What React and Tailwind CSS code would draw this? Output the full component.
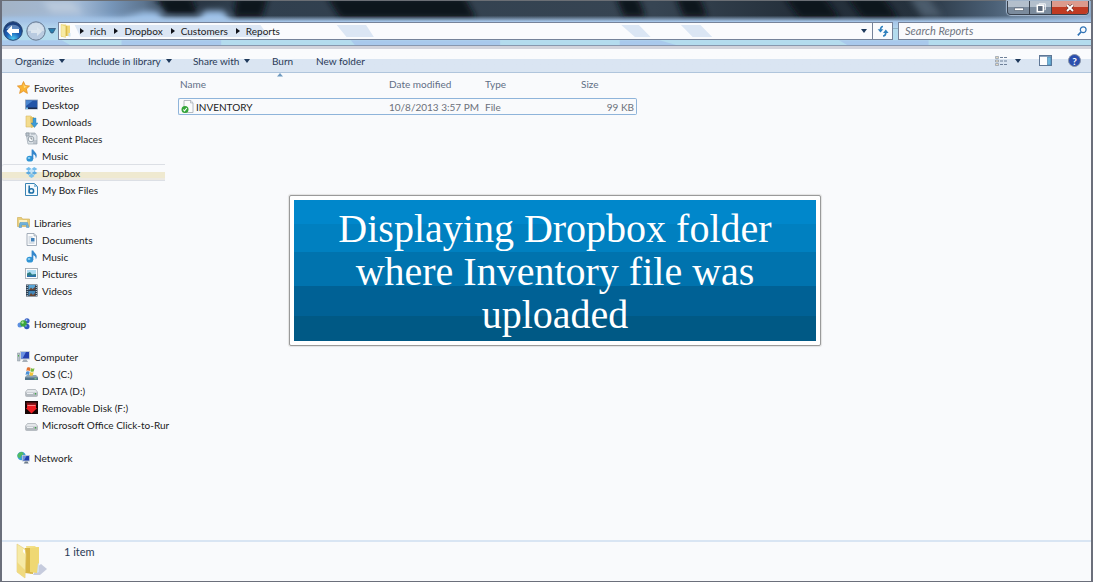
import React from 'react';

const StarIcon = () => (
  <svg viewBox="0 0 13 13" className="w-[13px] h-[13px] shrink-0" aria-hidden="true">
    <path d="M6.500 .5 8.300 4.500 12.600 5 9.400 8l1 4.400-3.900-2.300-3.900 2.300 1-4.400L.4 5l4.300-.5z" fill="#fbb434" stroke="#e08a1e" strokeWidth=".7" />
    <path d="M6.500 2.500 7.700 5.300 10 5.600 7 7z" fill="#ffe48c" />
  </svg>
);

const DesktopIcon = () => (
  <svg viewBox="0 0 13 13" className="w-[13px] h-[13px] shrink-0" aria-hidden="true">
    <rect x=".5" y="2" width="12" height="9" fill="#2456a8" stroke="#8fa0b8" strokeWidth=".8" />
    <path d="M1 2.500h7L1 8z" fill="#4b86cf" />
    <path d="M1 9.500h11v1.500H1z" fill="#1d2c4c" />
    <path d="M1 9.500h2v1.500H1z" fill="#74c1ee" />
  </svg>
);

const DownloadsIcon = () => (
  <svg viewBox="0 0 13 13" className="w-[13px] h-[13px] shrink-0" aria-hidden="true">
    <path d="M1 1h5l1 1v10H1z" fill="#f3dc8e" stroke="#d9b863" strokeWidth=".6" />
    <path d="M5 2h4v10l-3 1z" fill="#e3c263" />
    <path d="M8 3h3v5h2l-3.500 4.500L6 8h2z" fill="#3d9bd6" stroke="#2378b3" strokeWidth=".4" />
  </svg>
);

const RecentIcon = () => (
  <svg viewBox="0 0 13 13" className="w-[13px] h-[13px] shrink-0" aria-hidden="true">
    <path d="M1 1h9l2 3v8H3z" fill="#dfe5ea" stroke="#9aa4ae" strokeWidth=".7" />
    <path d="M1 1h3v3H1zM6 2h4M8 9h4M8 11h4" fill="#b9c3cc" stroke="#8f9aa5" strokeWidth=".8" />
    <circle cx="6" cy="7" r="2.800" fill="#f6f9fb" stroke="#7f8b97" strokeWidth=".8" />
    <path d="M6 5.200V7h1.500" fill="none" stroke="#56616c" strokeWidth=".7" />
  </svg>
);

const MusicIcon = () => (
  <svg viewBox="0 0 13 13" className="w-[13px] h-[13px] shrink-0" aria-hidden="true">
    <ellipse cx="4.800" cy="9.700" rx="3.400" ry="2.900" fill="#2f94d4" />
    <path d="M6.600.5H8.200c.4 2 3.700 3 3.500 6.500-.1 1-.5 1.900-1 2.500.3-2.500-.7-3.700-2.400-4.300v4.800H6.600z" fill="#3587cc" />
    <ellipse cx="4" cy="9" rx="1.400" ry="1" fill="#8fd0f4" />
  </svg>
);

const DropboxIcon = () => (
  <svg viewBox="0 0 13 13" className="w-[13px] h-[13px] shrink-0" aria-hidden="true">
    <path d="M3.800 1 6.500 3 3.700 5 .6 3.100zM9.200 1 12.400 3.100 9.300 5 6.500 3z" fill="#74bdec" />
    <path d="M3.700 5 6.500 7 3.800 8.800 .6 6.900zM9.300 5 12.400 6.900 9.200 8.800 6.500 7z" fill="#5aa9e0" />
    <path d="M3.700 5 6.500 3 9.300 5 6.500 7z" fill="#c4e3f7" />
    <path d="M6.500 7.600 9.200 9.500v.8L6.500 12 3.800 10.300v-.8z" fill="#7cc2ee" />
  </svg>
);

const BoxIcon = () => (
  <svg viewBox="0 0 13 13" className="w-[13px] h-[13px] shrink-0" aria-hidden="true">
    <path d="M.5.500h9l3 3v9H.5z" fill="#f5fafd" stroke="#3a83b3" strokeWidth="1" />
    <path d="M9 .5v3.500h3.500z" fill="#8fc0de" />
    <path d="M4.200 2.500v7.800" stroke="#1d6fa8" strokeWidth="1.500" fill="none" />
    <circle cx="6.400" cy="7.900" r="2.200" stroke="#1d6fa8" strokeWidth="1.500" fill="none" />
  </svg>
);

const LibrariesIcon = () => (
  <svg viewBox="0 0 13 13" className="w-[13px] h-[13px] shrink-0" aria-hidden="true">
    <path d="M.5 1.500h4l1 1.500h7v7.500H.5z" fill="#e9cf7d" stroke="#cfa94f" strokeWidth=".6" />
    <path d="M2 4h8v3H2z" fill="#fbf1c4" />
    <path d="M3 6.500h7.500l1.500 5H9.500V9h-5v2.500H2z" fill="#6fb2dc" stroke="#4e93c1" strokeWidth=".5" />
  </svg>
);

const DocumentIcon = () => (
  <svg viewBox="0 0 13 13" className="w-[13px] h-[13px] shrink-0" aria-hidden="true">
    <path d="M2 .5h7l2.500 2.500v9.500H2z" fill="#fbfcfd" stroke="#8f9aa8" strokeWidth=".8" />
    <path d="M9 .5V3h2.500" fill="#d3dbe4" stroke="#8f9aa8" strokeWidth=".6" />
    <path d="M3.500 4h4M3.500 6h2M3.500 8h2M3.500 10h6" stroke="#9aaabd" strokeWidth=".7" />
    <rect x="6" y="5" width="3.500" height="3.500" fill="#3f7fb8" />
  </svg>
);

const PicturesIcon = () => (
  <svg viewBox="0 0 13 13" className="w-[13px] h-[13px] shrink-0" aria-hidden="true">
    <rect x=".5" y="1.500" width="12" height="10" fill="#fdfdfd" stroke="#9aa2ab" strokeWidth=".8" />
    <rect x="2" y="3" width="9" height="7" fill="#aedcf3" />
    <path d="M2 6.500 5 5l2 2.500 4-.5v3H2z" fill="#2f7f83" />
    <path d="M2 8.500h9V10H2z" fill="#2a6fae" />
  </svg>
);

const VideosIcon = () => (
  <svg viewBox="0 0 13 13" className="w-[13px] h-[13px] shrink-0" aria-hidden="true">
    <rect x="1" y=".5" width="11.500" height="12" fill="#2d3e50" />
    <rect x="3.500" y="1" width="6.500" height="5" fill="#5aa5d6" />
    <rect x="3.500" y="7" width="6.500" height="5" fill="#4387ba" />
    <path d="M4 6 6 3.500 7.500 5 10 3v3zM4 12l2-3 2 2 2-2v3z" fill="#6b4632" />
    <path d="M2.200 1v11M11.300 1v11" stroke="#d6e2ea" strokeWidth="1" strokeDasharray="1 1" />
  </svg>
);

const HomegroupIcon = () => (
  <svg viewBox="0 0 13 13" className="w-[13px] h-[13px] shrink-0" aria-hidden="true">
    <circle cx="3" cy="8" r="2.500" fill="#5b8fe0" />
    <circle cx="10" cy="3.800" r="2.600" fill="#3a62c4" />
    <circle cx="9.800" cy="9.500" r="2.700" fill="#2e57bd" />
    <circle cx="6.500" cy="6.500" r="3.200" fill="#3aa53e" />
    <circle cx="5.600" cy="5.500" r="1.200" fill="#a9e39a" />
    <circle cx="9.500" cy="3.200" r=".9" fill="#a9c4f5" />
    <circle cx="9" cy="9" r=".8" fill="#9bb8f2" />
  </svg>
);

const ComputerIcon = () => (
  <svg viewBox="0 0 13 13" className="w-[13px] h-[13px] shrink-0" aria-hidden="true">
    <path d="M.3 3h2.700v8H.3z" fill="#b6c1c8" stroke="#87939c" strokeWidth=".5" />
    <path d="M1 5h1v1.500H1z" fill="#4db04a" />
    <rect x="3.500" y="1.500" width="9" height="7.500" fill="#233fae" stroke="#c5ced8" strokeWidth="1" />
    <path d="M4 2h5L5.500 8.500H4z" fill="#6a90e2" />
    <path d="M6.500 9.500h3l1.500 2.500H5z" fill="#a7b0ba" />
  </svg>
);

const OsDriveIcon = () => (
  <svg viewBox="0 0 13 13" className="w-[13px] h-[13px] shrink-0" aria-hidden="true">
    <path d="M2 8h9l2 2v3H0v-3z" fill="#8fa6b5" />
    <path d="M0 10.500h13V13H0z" fill="#52758c" />
    <path d="M2 .8c1.500-.8 2.500-.6 3.500 0L4.800 4.100c-1-.6-2-.7-3.500 0z" fill="#e3722f" />
    <path d="M6 1.100c1.200.7 2.200.7 3.500.2l-.8 3.200c-1.300.5-2.300.4-3.400-.2z" fill="#7cb83e" />
    <path d="M1.200 4.800c1.400-.7 2.500-.6 3.500 0L4 8c-1-.6-2-.7-3.500 0z" fill="#4a90d6" />
    <path d="M5.200 5.100c1.100.6 2.100.7 3.400.2L7.800 8.500c-1.300.5-2.300.4-3.400-.2z" fill="#f3c53a" />
    <path d="M9.500 11.800h2" stroke="#8de07c" strokeWidth="1" />
  </svg>
);

const DriveIcon = () => (
  <svg viewBox="0 0 13 13" className="w-[13px] h-[13px] shrink-0" aria-hidden="true">
    <path d="M2.500 5.500h8l2 2.500v3.500a1 1 0 0 1-1 1h-10a1 1 0 0 1-1-1V8z" fill="#e4e7ea" stroke="#a3a9af" strokeWidth=".7" />
    <path d="M1 8.500h11.500v2.700a1 1 0 0 1-1 1H1.800a1 1 0 0 1-1-1z" fill="#b3b9bf" />
    <path d="M2 9.500h6" stroke="#f4f6f8" strokeWidth=".9" />
    <path d="M10.500 9v1.500" stroke="#3fa845" strokeWidth="1.200" />
  </svg>
);

const RemovableIcon = () => (
  <svg viewBox="0 0 13 13" className="w-[13px] h-[13px] shrink-0" aria-hidden="true">
    <rect width="13" height="13" fill="#160505" />
    <path d="M1.500 1.500h10v2h-10z" fill="#7a1418" />
    <path d="M2 3.500h9v3.500h1.200L6.500 12.500.8 7H2z" fill="#ee1c22" />
    <path d="M2.500 4.500h8" stroke="#ffb0b0" strokeWidth=".7" />
  </svg>
);

const NetworkIcon = () => (
  <svg viewBox="0 0 13 13" className="w-[13px] h-[13px] shrink-0" aria-hidden="true">
    <circle cx="4.500" cy="5" r="4.200" fill="#3ba0d8" />
    <path d="M2 2c2-1.500 4-1 4.500.5S4 4 3.800 6 1.500 7 .7 5.500 1 3 2 2z" fill="#52bb62" />
    <rect x="5.500" y="4.500" width="7" height="5.500" fill="#1f3fae" stroke="#bcc7d3" strokeWidth=".9" />
    <path d="M6 5h3.500L7 9.500H6z" fill="#6d92e0" />
    <path d="M8 10.500h2.500l1.200 2h-5z" fill="#6c7a89" />
  </svg>
);

const FolderIcon = () => (
  <svg viewBox="0 0 13 14" className="w-[13px] h-[14px] shrink-0" aria-hidden="true">
    <path d="M2 .5h5l.5 1H11v10.500H6L2 13z" fill="#f1d97a" />
    <path d="M2 .5 6.500 2v11.500L2 12z" fill="#f7eaa5" stroke="#dfc562" strokeWidth=".4" />
    <path d="M7 2h1.200v10H7z" fill="#dbbb4a" />
    <path d="M9.500 9h2v3.500h-2z" fill="#cfe0ee" />
  </svg>
);

const BigFolderIcon = () => (
  <svg viewBox="0 0 32 36" className="w-8 h-9 shrink-0" aria-hidden="true">
    <path d="M21 24l4-3 6 5-7 6h-7z" fill="#b9bfd4" opacity=".8" />
    <path d="M10 3h9l1 1h3v23l-9 4z" fill="#f3e08a" />
    <path d="M9 5h8v26l-8-1z" fill="#d7b444" />
    <path d="M14 5l9-1v20l-2 6-7-1z" fill="#efd873" />
    <path d="M1 1l8 5 1 5-1 24-8-6z" fill="#f6eaa6" stroke="#e2cb78" strokeWidth=".6" />
    <path d="M1 19l8 8v8l-8-6z" fill="#f0da80" />
    <path d="M7 6l2 1v4L7 9z" fill="#fdfdf6" />
    <path d="M22 20l1 1v8l-2 1z" fill="#cfdff0" />
  </svg>
);

const FileIcon = () => (
  <svg viewBox="0 0 14 15" className="w-[14px] h-[15px] shrink-0" aria-hidden="true">
    <path d="M3 1.500h7L12 4v9.500H3z" fill="#fbfcfc" stroke="#a4abb3" strokeWidth=".8" />
    <path d="M9.500 1.500V4H12" fill="#e2e6ea" stroke="#a4abb3" strokeWidth=".6" />
    <circle cx="4" cy="10.500" r="3.500" fill="#35a63a" />
    <path d="M2.300 10.500 3.500 11.800 5.800 9" fill="none" stroke="#fff" strokeWidth="1.100" />
  </svg>
);

const Caret = ({ side = false }) => (
  <svg viewBox="0 0 6 6" className="w-[6px] h-[6px] shrink-0" aria-hidden="true">
    {side ? <path d="M1 0l4 3-4 3z" fill="#10131a" /> : <path d="M0 1h6L3 5z" fill="#1e395b" />}
  </svg>
);

const groups = [
  {
    title: 'Favorites',
    icon: StarIcon,
    items: [
      { name: 'Desktop', icon: DesktopIcon },
      { name: 'Downloads', icon: DownloadsIcon },
      { name: 'Recent Places', icon: RecentIcon },
      { name: 'Music', icon: MusicIcon },
      { name: 'Dropbox', icon: DropboxIcon, active: true },
      { name: 'My Box Files', icon: BoxIcon },
    ],
  },
  {
    title: 'Libraries',
    icon: LibrariesIcon,
    items: [
      { name: 'Documents', icon: DocumentIcon },
      { name: 'Music', icon: MusicIcon },
      { name: 'Pictures', icon: PicturesIcon },
      { name: 'Videos', icon: VideosIcon },
    ],
  },
  { title: 'Homegroup', icon: HomegroupIcon, items: [] },
  {
    title: 'Computer',
    icon: ComputerIcon,
    items: [
      { name: 'OS (C:)', icon: OsDriveIcon },
      { name: 'DATA (D:)', icon: DriveIcon },
      { name: 'Removable Disk (F:)', icon: RemovableIcon },
      { name: 'Microsoft Office Click-to-Rur', icon: DriveIcon },
    ],
  },
  { title: 'Network', icon: NetworkIcon, items: [] },
];

const crumbs = ['rich', 'Dropbox', 'Customers', 'Reports'];

const files = [{ name: 'INVENTORY', modified: '10/8/2013 3:57 PM', type: 'File', size: '99 KB' }];

// Desktop wallpaper seen through the glass frame
const GlassBackdrop = () => (
  <svg viewBox="0 0 1093 46" preserveAspectRatio="none" className="absolute inset-0 w-full h-full" aria-hidden="true">
    <defs>
      <linearGradient id="sky" x1="0" x2="1" y1="0" y2="0">
        <stop offset="0" stopColor="#a3b3c6" />
        <stop offset=".07" stopColor="#a3bad6" />
        <stop offset=".1" stopColor="#7796b9" />
        <stop offset=".13" stopColor="#5d7590" />
        <stop offset=".16" stopColor="#26323f" />
        <stop offset=".22" stopColor="#303f4e" />
        <stop offset=".6" stopColor="#374553" />
        <stop offset=".74" stopColor="#232e39" />
        <stop offset=".84" stopColor="#26323e" />
        <stop offset=".91" stopColor="#4b6076" />
        <stop offset="1" stopColor="#8fa9c6" />
      </linearGradient>
      <linearGradient id="rim" x1="0" x2="0" y1="0" y2="1">
        <stop offset="0" stopColor="#a5c4e6" stopOpacity="0" />
        <stop offset=".45" stopColor="#a5c4e6" />
        <stop offset="1" stopColor="#b4d6ee" />
      </linearGradient>
      <filter id="soft" x="-10%" y="-60%" width="120%" height="220%">
        <feGaussianBlur stdDeviation="3" />
      </filter>
    </defs>
    <rect width="1093" height="46" fill="url(#sky)" />
    <g filter="url(#soft)">
      <path d="M154-4h36l6 18h-30zM326-4h138l12 22H340zM616-4h22l8 20h-22zM676-4h24l8 20h-24zM785-4h40l16 22h-40zM848-4h36l16 22h-36zM235-4h32l-6 20h-28z" fill="#0b121a" />
      <path d="M0 17h120l22-6h14l6 7h34l8-8h18l8 10v12H0z" fill="#9fc3ea" />
      <path d="M40 0h30l10 12H50z" fill="#b9c9dc" />
      <path d="M910-4h20l14 20h-20z" fill="#4b5c6c" />
    </g>
    <rect y="15" width="1093" height="13" fill="url(#rim)" />
    <rect y="28" width="1093" height="18" fill="#b4dcee" />
    <path d="M350 40h150v6H355zM0 40h60l10 6H0zM840 40h90v6h-80zM620 40h40l20 6h-60zM120 40h100v6H120z" fill="#a9c9ec" />
    <path d="M0 45.500h1093" stroke="#8796ad" />
  </svg>
);

const SidebarRow = ({ icon: Icon, name, nested = false, active = false }) => (
  <a
    href="#"
    className={`flex items-center gap-1 h-[17px] whitespace-nowrap ${nested ? 'pl-[23px]' : 'pl-[15px]'} ${
      active ? 'rounded-l-xs shadow-[inset_0_1px_#dcdfe5,inset_0_-1px_#dcdfe5] bg-[linear-gradient(#f9fafc_50%,#efe9d0_50%_84%,#ece9e2_84%)]' : ''
    }`}
  >
    <Icon />
    <span>{name}</span>
  </a>
);

const App = () => {
  return (
    <div className="relative min-h-screen flex flex-col bg-[#f9fafc] border-x-2 border-b border-[#6b6f7b] font-[Lato,'Open_Sans',sans-serif] text-[10px] leading-[14px] text-[#1b1b22]">
      {/* Title bar and address bar */}
      <header className="relative border-t border-[#6b6f75]">
        <GlassBackdrop />
        <div className="relative flex justify-end h-[21px] pr-[2px]">
          <div className="flex h-[14px] rounded-b border border-t-0 border-[#39414d] overflow-hidden shadow-[0_0_1px_1px_#a9bdd4]">
            <button aria-label="Minimize" className="w-[22px] flex items-center justify-center border-r border-[#39414d] bg-linear-to-b from-[#b3bfcc] from-45% to-[#7b8b9d] to-50%">
              <svg viewBox="0 0 10 6" className="w-[10px] h-[6px]"><path d="M.5 3h9v2.500h-9z" fill="#fff" stroke="#4a5564" strokeWidth=".6" /></svg>
            </button>
            <button aria-label="Restore" className="w-[22px] flex items-center justify-center border-r border-[#39414d] bg-linear-to-b from-[#b3bfcc] from-45% to-[#7b8b9d] to-50%">
              <svg viewBox="0 0 10 10" className="w-[10px] h-[10px]">
                <path d="M3 1.500V.8h6.300v6H8.500" fill="none" stroke="#f2f4f7" strokeWidth="1" />
                <rect x="1.300" y="2.300" width="6" height="6.400" fill="#5a6779" stroke="#fff" strokeWidth="1.500" />
              </svg>
            </button>
            <button aria-label="Close" className="w-[36px] flex items-center justify-center bg-linear-to-b from-[#dc9a8c] from-45% to-[#c03a22] to-50%">
              <svg viewBox="0 0 10 8" className="w-[10px] h-2">
                <path d="M2 1l6 6M8 1l-6 6" stroke="#5b2a26" strokeWidth="3" />
                <path d="M2 1l6 6M8 1l-6 6" stroke="#fff" strokeWidth="1.900" />
              </svg>
            </button>
          </div>
        </div>

        <div className="relative flex items-center h-[18px] mb-[6px]">
          <div className="flex items-center w-[56px] pl-[1px]">
            <button aria-label="Back" className="-my-1">
              <svg viewBox="0 0 20 20" className="w-5 h-5">
                <defs>
                  <radialGradient id="orb" cx=".5" cy=".95" r=".8">
                    <stop offset="0" stopColor="#4fd0f5" />
                    <stop offset=".5" stopColor="#1c62b8" />
                    <stop offset="1" stopColor="#1b3f7e" />
                  </radialGradient>
                </defs>
                <circle cx="10" cy="10" r="9.300" fill="url(#orb)" stroke="#28456f" strokeWidth="1" />
                <path d="M3 8a7.500 6.500 0 0 1 14 0z" fill="#8fb4df" opacity=".55" />
                <path d="M3.500 10 9 4.500v3.600h7v3.800H9v3.600z" fill="#fff" />
              </svg>
            </button>
            <button aria-label="Forward" className="-my-1 ml-[3px]">
              <svg viewBox="0 0 20 20" className="w-5 h-5">
                <circle cx="10" cy="10" r="9.200" fill="#b9cbe0" stroke="#66788f" strokeWidth="1" />
                <path d="M2 10a8 8 0 0 1 16 0z" fill="#d3dfeb" />
                <path d="M16 10.500 11 15v-3H5V9h6V6z" fill="#dce6ef" />
              </svg>
            </button>
            <button aria-label="Recent pages" className="ml-[2px]">
              <svg viewBox="0 0 8 6" className="w-2 h-[6px]"><path d="M.5.500h7L5 5H3z" fill="#2a7fae" stroke="#2e4a6e" strokeWidth=".7" /></svg>
            </button>
          </div>

          <div className="flex flex-1 h-[18px] border border-[#76839a] bg-[#fafbfd]">
            <nav aria-label="Address" className="relative flex flex-1 items-center overflow-hidden">
              <svg viewBox="0 0 814 16" preserveAspectRatio="none" className="absolute inset-0 w-full h-full" aria-hidden="true">
                <path d="M16 2h190l9 12H22zM284 2h30l8 12h-28zM575 2h18l12 12h-16zM636 2h20l12 12h-20z" fill="#dbe6f4" />
              </svg>
              <span className="relative flex items-center">
                <FolderIcon />
                {crumbs.map((c) => (
                  <a key={c} href="#" className="flex items-center gap-[5px] ml-[7px]">
                    <Caret side />
                    {c}
                  </a>
                ))}
              </span>
            </nav>
            <button aria-label="Previous locations" className="w-[17px] flex items-center justify-center">
              <Caret />
            </button>
            <button aria-label="Refresh" className="w-5 flex items-center justify-center border-l border-[#76839a]">
              <svg viewBox="0 0 12 12" className="w-3 h-3" fill="none" stroke="#2f80bd" strokeWidth="1.700">
                <path d="M6 1.500C3.800 1.500 3.500 3 3.500 5.500" />
                <path d="M.7 4.200h5.600L3.500 7.600z" fill="#2f80bd" stroke="none" />
                <path d="M6 11c2.200 0 2.800-1.500 2.800-4" />
                <path d="M6 8h5.600L8.800 4.600z" fill="#2f80bd" stroke="none" />
              </svg>
            </button>
          </div>

          <form role="search" className="flex items-center h-[18px] w-[193px] ml-[5px] pl-[6px] pr-1 border border-r-0 border-[#76839a] bg-[#fafbfd]">
            <input
              type="text"
              aria-label="Search Reports"
              placeholder="Search Reports"
              className="flex-1 min-w-0 bg-transparent outline-none italic text-[11px] placeholder:text-[#6f7580]"
            />
            <button type="button" aria-label="Search">
              <svg viewBox="0 0 10 10" className="w-[10px] h-[10px]" fill="none" stroke="#2f72b5">
                <circle cx="6.200" cy="3.800" r="2.900" strokeWidth="1.200" />
                <path d="M4 6 .8 9.300" strokeWidth="1.700" />
              </svg>
            </button>
          </form>
        </div>
      </header>

      {/* Command bar */}
      <div className="flex items-center h-[27px] pl-[13px] pr-[10px] border-t-3 border-t-[#d3d4dc] border-b border-b-[#b0c5dc] bg-linear-to-b from-[#fafbfd] from-45% to-[#dae5f2] to-45% text-[#2a3a57]">
        <button className="flex items-center gap-[5px] w-[73px]">Organize <Caret /></button>
        <button className="flex items-center gap-[5px] w-[105px]">Include in library <Caret /></button>
        <button className="flex items-center gap-[5px] w-[79px]">Share with <Caret /></button>
        <button className="w-[44px] text-left">Burn</button>
        <button>New folder</button>
        <div className="flex items-center ml-auto">
          <button aria-label="Change view" className="flex items-center gap-2">
            <svg viewBox="0 0 12 10" className="w-3 h-[10px]">
              <path d="M.5.500h3v2h-3zM.5 4h3v2h-3zM.5 7.500h3v2h-3z" fill="#e6d9c0" stroke="#7d8da3" strokeWidth=".6" />
              <path d="M5 1.500h3M5 5h3M5 8.500h3M9 1.500h3M9 5h3M9 8.500h3" stroke="#6f819a" strokeWidth="1" />
            </svg>
            <Caret />
          </button>
          <button aria-label="Show the preview pane" className="ml-[18px]">
            <svg viewBox="0 0 13 11" className="w-[13px] h-[11px]">
              <rect x=".5" y=".5" width="12" height="10" fill="#fdfdfe" stroke="#5f7796" />
              <path d="M1 1h11v1H1z" fill="#8fa5be" />
              <path d="M8.500 2H12v8H8.500z" fill="#6fb6dc" stroke="#3f7ba6" strokeWidth=".6" />
            </svg>
          </button>
          <button aria-label="Get help" className="flex items-center justify-center w-[13px] h-[13px] ml-4 rounded-full bg-[#2b4fae] border border-[#8894a8] text-white font-bold text-[10px] leading-none">
            ?
          </button>
        </div>
      </div>

      {/* Navigation pane and file list */}
      <main className="flex flex-1">
        <aside className="w-[163px] pt-[6px] shrink-0">
          <nav aria-label="Folders" className="flex flex-col gap-4">
            {groups.map((group) => (
              <div key={group.title}>
                <SidebarRow icon={group.icon} name={group.title} />
                {group.items.map((item) => (
                  <SidebarRow key={item.name} icon={item.icon} name={item.name} active={item.active} nested />
                ))}
              </div>
            ))}
          </nav>
        </aside>

        <section className="flex-1 pl-[13px]">
          <table className="table-fixed w-[459px] border-separate border-spacing-0">
            <thead>
              <tr className="text-left text-[#5f6e85]">
                <th className="relative w-[209px] h-[25px] pl-[2px] pb-[3px] font-normal">
                  Name
                  <svg viewBox="0 0 6 4" className="absolute left-[99px] top-0 w-[6px] h-1" aria-hidden="true"><path d="M3 0l3 3.500H0z" fill="#6f9ac0" /></svg>
                </th>
                <th className="w-[97px] pb-[3px] pl-[2px] font-normal">Date modified</th>
                <th className="w-[96px] pb-[3px] pl-[1px] font-normal">Type</th>
                <th className="pb-[3px] pl-[1px] font-normal">Size</th>
              </tr>
            </thead>
            <tbody>
              {files.map((f) => (
                <tr key={f.name} className="text-[#6b707a]">
                  <td className="h-[17px] p-0 pl-[2px] border-y border-l rounded-l-xs border-[#8fb4da]">
                    <a href="#" className="flex items-center gap-[1px] text-[#1b1b22]">
                      <FileIcon />
                      {f.name}
                    </a>
                  </td>
                  <td className="p-0 pl-[2px] border-y border-[#8fb4da]">{f.modified}</td>
                  <td className="p-0 pl-[1px] border-y border-[#8fb4da]">{f.type}</td>
                  <td className="p-0 pr-[2px] text-right border-y border-r rounded-r-xs border-[#8fb4da]">{f.size}</td>
                </tr>
              ))}
            </tbody>
          </table>
        </section>
      </main>

      {/* Details pane */}
      <footer className="flex items-start h-[41px] gap-4 pl-[14px] pt-[1px] border-t-2 border-[#d9e5f3] text-[11px] text-[#2a3a57]">
        <BigFolderIcon />
        <span className="pt-[2px]">1 item</span>
      </footer>

      {/* Caption */}
      <div className="absolute left-[287px] top-[195px] w-[532px] p-1 border border-[#9a9a9a] rounded-xs bg-white shadow-[0_0_1px_1px_#e3e3e3]">
        <p className="pt-[7px] pb-[5px] text-center text-white font-['Liberation_Serif',serif] text-[40px] leading-[43px] bg-[linear-gradient(#0087cb_24px,#0080c0_24px_52px,#0073ae_52px_86px,#006195_86px_116px,#005985_116px)]">
          Displaying Dropbox folder where Inventory file was uploaded
        </p>
      </div>
    </div>
  );
};

export default App;
